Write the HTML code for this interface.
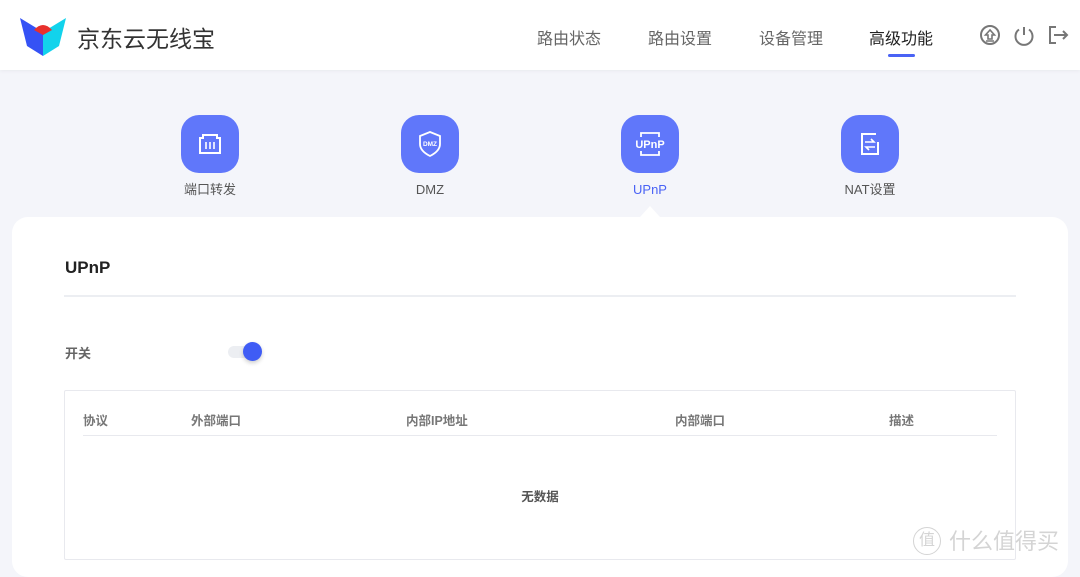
<!DOCTYPE html>
<html><head><meta charset="utf-8"><style>
*{margin:0;padding:0;box-sizing:border-box}
body{width:1080px;height:568px;overflow:hidden;background:#f4f5fa;font-family:"Liberation Sans","Noto Sans CJK SC",sans-serif;position:relative}
.hdr{position:absolute;left:0;top:0;width:1080px;height:70px;background:#fff;box-shadow:0 1px 4px rgba(0,0,0,.05)}
.logo-t{position:absolute;left:77px;top:20px;font-size:23px;color:#333}
.nav{position:absolute;top:25px;font-size:16px;color:#666}
.ul{position:absolute;left:888px;top:54px;width:27px;height:3px;background:#4a63f5;border-radius:2px}
.ico{position:absolute;top:115px;width:58px;height:58px;border-radius:18px;background:#6077fa}
.lab{position:absolute;top:180px;font-size:13px;color:#555;width:120px;text-align:center;line-height:20px}
.card{position:absolute;left:12px;top:217px;width:1056px;height:360px;background:#fff;border-radius:16px}
.tri{position:absolute;left:640px;top:206px;width:0;height:0;border-left:10px solid transparent;border-right:10px solid transparent;border-bottom:11px solid #fff}
.th{position:absolute;top:410px;font-size:12.5px;color:#777;font-weight:bold}
</style></head><body>
<div class="hdr">
<svg style="position:absolute;left:19px;top:16px" width="48" height="40" viewBox="0 0 48 40">
<polygon points="1,2 24,16 24,40 8,30" fill="#3552f5"/>
<polygon points="47,2 24,16 24,40 40,30" fill="#12d3ec"/>
<path d="M15,14 Q24,4 33,14 L24,19 Z" fill="#e8302c"/>
</svg>
<div class="logo-t">京东云无线宝</div>
<div class="nav" style="left:537px">路由状态</div>
<div class="nav" style="left:648px">路由设置</div>
<div class="nav" style="left:759px">设备管理</div>
<div class="nav" style="left:869px;color:#222">高级功能</div>
<div class="ul"></div>
<svg style="position:absolute;left:980px;top:24px" width="92" height="24" viewBox="0 0 92 24" fill="none" stroke="#777" stroke-width="2">
<circle cx="10" cy="11" r="9"/><path d="M10 6 L5.5 11 H8 V15 H12 V11 H14.5 Z M6 17 H14" stroke-width="1.6"/>
<path d="M44 3 V11" /><path d="M39 5.5 A8.5 8.5 0 1 0 49 5.5"/>
<path d="M76 3 H70 V19 H76"/><path d="M74 11 H87 M83 7 L87 11 L83 15"/>
</svg>
</div>
<div class="ico" style="left:181px"><svg width="58" height="58" viewBox="0 0 58 58" fill="none" stroke="#fff" stroke-width="2"><path d="M19 23 H22 V20 H36 V23 H39 V38 H19 Z"/><path d="M25 27 V34 M29 27 V34 M33 27 V34" stroke-width="1.6"/></svg></div>
<div class="ico" style="left:401px"><svg width="58" height="58" viewBox="0 0 58 58" fill="none" stroke="#fff" stroke-width="1.8"><path d="M29 17 L39 21 V29 Q39 36 29 41 Q19 36 19 29 V21 Z"/><text x="29" y="31" font-size="6.5" fill="#fff" stroke="none" text-anchor="middle" font-weight="bold" font-family="Liberation Sans">DMZ</text></svg></div>
<div class="ico" style="left:621px"><svg width="58" height="58" viewBox="0 0 58 58" fill="none" stroke="#fff" stroke-width="1.8"><path d="M20 22 V18 H38 V22 M20 36 V40 H38 V36"/><text x="29" y="33" font-size="11" fill="#fff" stroke="none" text-anchor="middle" font-weight="bold" font-family="Liberation Sans">UPnP</text></svg></div>
<div class="ico" style="left:841px"><svg width="58" height="58" viewBox="0 0 58 58" fill="none" stroke="#fff" stroke-width="2"><path d="M35 19 H21 V39 H37 V27"/><path d="M24 27 H33 L30 24 M34 32 H25 L28 35" stroke-width="1.6"/></svg></div>
<div class="lab" style="left:150px">端口转发</div>
<div class="lab" style="left:370px">DMZ</div>
<div class="lab" style="left:590px;color:#4a63f5">UPnP</div>
<div class="lab" style="left:810px">NAT设置</div>
<div class="tri"></div>
<div class="card"></div>
<div style="position:absolute;left:65px;top:258px;font-size:17px;font-weight:bold;color:#222">UPnP</div>
<div style="position:absolute;left:64px;top:295px;width:952px;height:2px;background:#eceef2"></div>
<div style="position:absolute;left:65px;top:343px;font-size:13px;color:#666;font-weight:bold">开关</div>
<div style="position:absolute;left:228px;top:346px;width:30px;height:12px;border-radius:6px;background:#eceef2"></div>
<div style="position:absolute;left:243px;top:342px;width:19px;height:19px;border-radius:50%;background:#3f5cf5;box-shadow:0 2px 4px rgba(0,0,0,.2)"></div>
<div style="position:absolute;left:64px;top:390px;width:952px;height:170px;border:1px solid #e8e9ee;border-radius:2px"></div>
<div class="th" style="left:83px">协议</div>
<div class="th" style="left:191px">外部端口</div>
<div class="th" style="left:406px">内部IP地址</div>
<div class="th" style="left:675px">内部端口</div>
<div class="th" style="left:889px">描述</div>
<div style="position:absolute;left:83px;top:435px;width:914px;height:1px;background:#e8e9ee"></div>
<div style="position:absolute;left:0;width:1080px;top:486px;text-align:center;font-size:12.5px;color:#555;font-weight:bold">无数据</div>
<div style="position:absolute;left:913px;top:527px;font-size:22px;color:#d4d4d4;letter-spacing:0px;line-height:30px"><span style="display:inline-block;width:28px;height:28px;border:1.5px solid #d4d4d4;border-radius:50%;font-size:16px;text-align:center;line-height:25px;vertical-align:top;margin-right:8px">值</span>什么值得买</div>
</body></html>
